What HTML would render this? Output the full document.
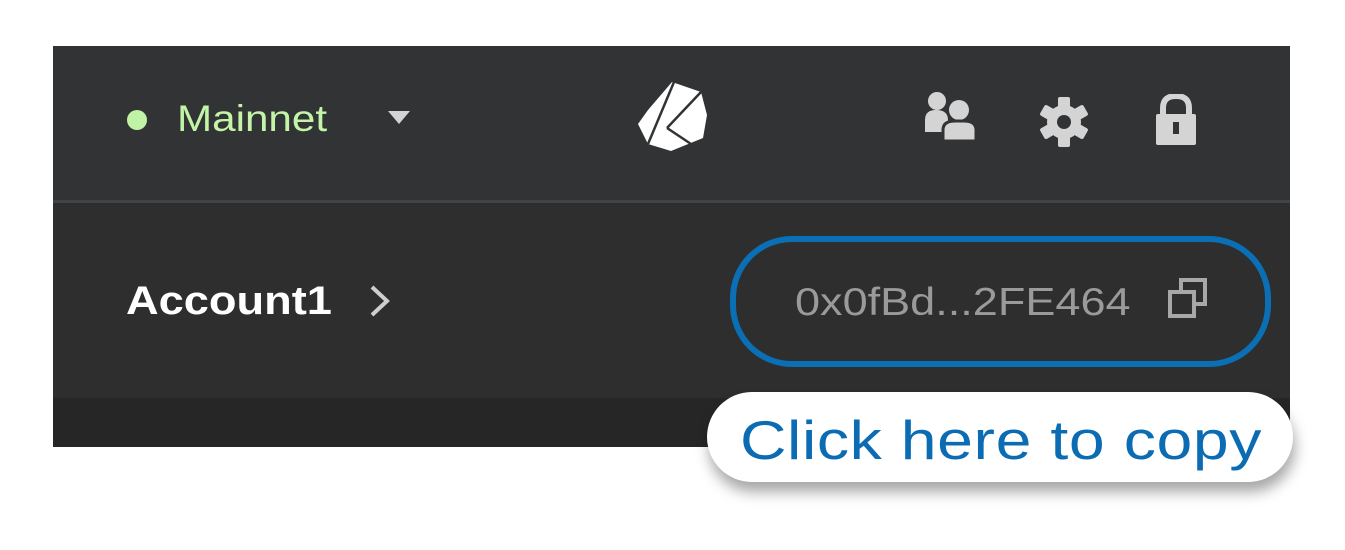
<!DOCTYPE html>
<html><head><meta charset="utf-8"><style>
html,body{margin:0;padding:0;background:#fff;width:1345px;height:550px;overflow:hidden;position:relative;font-family:"Liberation Sans",sans-serif}
.abs{position:absolute;white-space:nowrap;transform-origin:0 50%}
</style></head><body>
<div class="abs" style="left:53px;top:46px;width:1237px;height:154px;background:#323335"></div>
<div class="abs" style="left:53px;top:200px;width:1237px;height:3px;background:#424347"></div>
<div class="abs" style="left:53px;top:203px;width:1237px;height:195px;background:#2e2e2e"></div>
<div class="abs" style="left:53px;top:398px;width:1237px;height:49px;background:#262626"></div>

<div class="abs" style="left:127px;top:110px;width:20px;height:20px;border-radius:50%;background:#c0f3a6"></div>
<div class="abs" style="left:177px;top:97px;font-size:37px;color:#c3f4a8;line-height:44px;transform:scaleX(1.14)">Mainnet</div>
<svg class="abs" style="left:388px;top:111px" width="22" height="16"><polygon points="0,0 22,0 11,13" fill="#d4d4d4"/></svg>

<svg class="abs" style="left:634px;top:82px" width="74" height="72" viewBox="0 0 74 72">
<polygon points="14,28 38,0 67,10 73,33 69,56 37,69 14,62 4,42" fill="#fff"/>
<g stroke="#323335" stroke-width="2.5"><line x1="40" y1="0" x2="14" y2="62"/><line x1="67" y1="10" x2="33" y2="46"/><line x1="33" y1="46" x2="60" y2="64"/></g>
</svg>

<svg class="abs" style="left:924px;top:90px" width="56" height="52" viewBox="0 0 56 52">
<circle cx="13" cy="11" r="9" fill="#d4d4d4"/><path d="M1 30 Q1 20 12 20 Q24 20 24 30 L24 42 L1 42Z" fill="#d4d4d4"/>
<circle cx="35" cy="20" r="10" fill="#d4d4d4"/><path d="M19 40 Q19 31 31 31 L40 31 Q52 31 52 40 L52 51 L19 51Z" fill="#d4d4d4" stroke="#323335" stroke-width="3"/>
</svg>
<svg class="abs" style="left:1036px;top:94px" width="56" height="56" viewBox="-28 -28 56 56">
<g fill="#d4d4d4"><circle r="17"/><g id="t"><rect x="-6" y="-25" width="12" height="11" rx="2"/></g>
<use href="#t" transform="rotate(60)"/><use href="#t" transform="rotate(120)"/><use href="#t" transform="rotate(180)"/><use href="#t" transform="rotate(240)"/><use href="#t" transform="rotate(300)"/></g>
<circle r="7" fill="#323335"/>
</svg>
<svg class="abs" style="left:1154px;top:94px" width="44" height="52" viewBox="0 0 44 52">
<path d="M9 22 V14 Q9 2 22 2 Q35 2 35 14 V22" fill="none" stroke="#d4d4d4" stroke-width="6"/>
<rect x="2" y="20" width="40" height="31" rx="2" fill="#d4d4d4"/><rect x="19" y="28" width="6" height="12" fill="#323335"/>
</svg>

<div class="abs" style="left:126px;top:278px;font-size:40px;font-weight:bold;color:#fff;line-height:46px;transform:scaleX(1.13)">Account1</div>
<svg class="abs" style="left:368px;top:284px" width="24" height="34"><polyline points="4,3 19,17 4,31" fill="none" stroke="#cfcfcf" stroke-width="4"/></svg>

<div class="abs" style="left:730px;top:236px;width:529px;height:119px;border:6px solid #0a6fb5;border-radius:62px"></div>
<div class="abs" style="left:795px;top:280px;font-size:39px;color:#9a9a9a;line-height:46px;transform:scaleX(1.155)">0x0fBd...2FE464</div>
<svg class="abs" style="left:1166px;top:277px" width="44" height="44" viewBox="0 0 44 44">
<rect x="15" y="3" width="24" height="24" fill="none" stroke="#a8a8a8" stroke-width="4"/>
<rect x="4" y="15" width="24" height="24" fill="#2e2e2e" stroke="#a8a8a8" stroke-width="4"/>
</svg>

<div class="abs" style="left:707px;top:392px;width:586px;height:90px;border-radius:45px;background:#fff;box-shadow:2px 10px 14px rgba(0,0,0,0.35)"></div>
<div class="abs" style="left:740px;top:400px;font-size:55px;color:#0b6cb3;line-height:80px;letter-spacing:0.5px;transform:scaleX(1.17)">Click here to copy</div>
</body></html>
